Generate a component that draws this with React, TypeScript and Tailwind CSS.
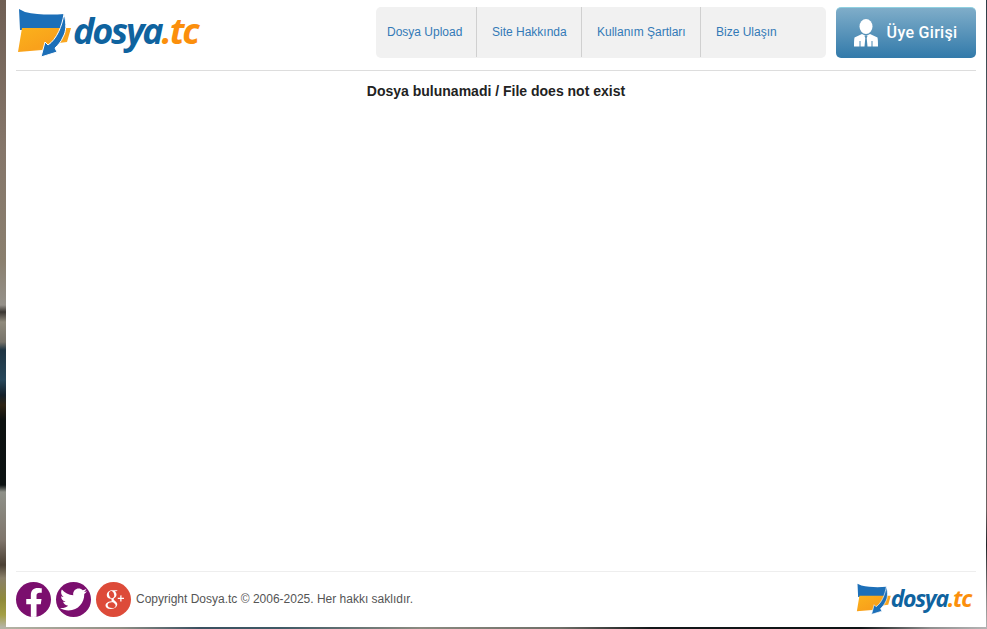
import { FaFacebookF, FaTwitter } from 'react-icons/fa';
import { TiSocialGooglePlus } from 'react-icons/ti';

function FolderMark({ className }: { className: string }) {
  return (
    <svg viewBox="0 0 54 50" className={className}>
      <defs>
        <linearGradient id="folderFront" x1="0" y1="0" x2="1" y2="1">
          <stop offset="0" stopColor="#fbb21c" />
          <stop offset="0.6" stopColor="#f9a11b" />
          <stop offset="1" stopColor="#f7b733" />
        </linearGradient>
      </defs>
      <path d="M2 1 L8 4 C20 7 36 7 47 6 L47 21 L3 22 Z" fill="#1c6fb8" />
      <path d="M5 20 L54 20 L50 34 L34 36 L25 42 L1 44 Z" fill="url(#folderFront)" />
      <path
        d="M47 6 C50 16 49 24 46 29 C44 34 41 37 38 40 L40 44 L24 49 L28 34 L31 37 C40 31 45 18 47 6 Z"
        fill="#1c6fb8"
        stroke="#ffffff"
        strokeWidth="1"
      />
    </svg>
  );
}

function Logo({ small }: { small?: boolean }) {
  return (
    <div className="flex items-center">
      <FolderMark className={small ? 'w-[35px] h-[32px]' : 'w-[54px] h-[50px]'} />
      <span
        className={`italic font-bold font-['Open_Sans',sans-serif] ${
          small
            ? 'text-[23px] tracking-[-1.3px] leading-[28px] mb-[3px]'
            : 'text-[36px] tracking-[-2.2px] ml-[2px] leading-[46px] mb-[4px]'
        }`}
      >
        <span className="text-[#0f639f]">dosya</span>
        <span className="text-[#fb8f0c]">.tc</span>
      </span>
    </div>
  );
}

function UserIcon() {
  return (
    <svg viewBox="0 0 24 28" className="w-[24px] h-[28px]" fill="#ffffff">
      <ellipse cx="12" cy="7.5" rx="6.5" ry="7.5" />
      <path d="M8 15 L0.5 18.5 C0 21 0 24 0 27.5 L5.5 27.5 L5.5 22 L6.5 22 L6.5 27.5 L10.5 27.5 L11.3 19 L10.5 17 L13.5 17 L12.7 19 L13.5 27.5 L17.5 27.5 L17.5 22 L18.5 22 L18.5 27.5 L24 27.5 C24 24 24 21 23.5 18.5 L16 15 L12 17 Z" />
    </svg>
  );
}

const navItems = [
  { label: 'Dosya Upload', cls: 'w-[101px] pl-[11px] border-r' },
  { label: 'Site Hakkında', cls: 'w-[105px] pl-[15px] border-r' },
  { label: 'Kullanım Şartları', cls: 'w-[119px] pl-[15px] border-r' },
  { label: 'Bize Ulaşın', cls: 'flex-1 pl-[15px]' },
];

export default function App() {
  return (
    <div className="h-[629px] w-full flex flex-col overflow-hidden font-['Liberation_Sans',Arial,sans-serif]">
      <div className="flex flex-1 min-h-0">
        {/* background photo edges */}
        <div className="w-[6px] bg-[linear-gradient(180deg,#6f5f54_0px,#85766a_150px,#8a7f6e_260px,#95918a_305px,#3a3632_312px,#8f8a7c_322px,#77736a_342px,#1e3442_350px,#27475a_380px,#14202a_395px,#2e2414_405px,#0d1110_420px,#0c1212_485px,#8f9189_492px,#7f756b_540px,#4b4034_565px,#8a8069_578px,#8f8a3a_600px,#a39f45_615px,#b5b4a5_627px)]" />
        <div className="w-[980px] bg-white rounded-b-[8px] px-[10px] flex flex-col">
          <header className="h-[71px] border-b border-[#dddddd] flex items-start justify-between">
            <div className="pt-[8px] pl-[1px]">
              <Logo />
            </div>
            <div className="flex pt-[7px] gap-[10px]">
              <nav className="w-[450px] h-[51px] bg-[#f1f1f1] rounded-[5px] flex">
                {navItems.map((item) => (
                  <a
                    key={item.label}
                    className={`${item.cls} h-[50px] border-[#d0d0d0] flex items-center text-[12px] text-[#337ab7]`}
                  >
                    {item.label}
                  </a>
                ))}
              </nav>
              <button className="w-[140px] h-[51px] rounded-[5px] border-t border-[#8fd0e0] bg-[linear-gradient(180deg,#7fadc9,#327aaa)] flex items-center justify-center gap-[9px] pr-[1px]">
                <UserIcon />
                <span className="text-[16px] font-medium text-white font-['Roboto',sans-serif] tracking-[0.3px]">
                  Üye Girişi
                </span>
              </button>
            </div>
          </header>

          <main className="flex-1 pt-[12px] text-center text-[14px] leading-[16px] font-bold text-[#222222]">
            Dosya bulunamadi / File does not exist
          </main>

          <footer className="h-[56px] border-t border-[#eeeeee] flex items-center justify-between pb-[1px]">
            <div className="flex items-center">
              <div className="flex gap-[5px]">
                <span className="w-[35px] h-[35px] rounded-full bg-[#7b0f6e] flex items-end justify-center text-white overflow-hidden">
                  <FaFacebookF className="w-[24px] h-[29px]" />
                </span>
                <span className="w-[35px] h-[35px] rounded-full bg-[#7b0f6e] flex items-center justify-center text-white">
                  <FaTwitter className="w-[27px] h-[27px]" />
                </span>
                <span className="w-[35px] h-[35px] rounded-full bg-[#dd4b39] flex items-center justify-center text-white">
                  <TiSocialGooglePlus className="w-[30px] h-[30px]" />
                </span>
              </div>
              <span className="ml-[5px] text-[12px] text-[#555555]">
                Copyright Dosya.tc © 2006-2025. Her hakkı saklıdır.
              </span>
            </div>
            <div className="pr-[5px]">
              <Logo small />
            </div>
          </footer>
        </div>
        <div className="flex-1 bg-[linear-gradient(180deg,#2c3c46_0px,#4e5b60_120px,#6d7272_300px,#5f6a6b_440px,#6b6060_510px,#1f2226_545px,#8d8d8d_600px,#b0b0b0_627px)]" />
      </div>
      <div className="h-[2px] bg-[linear-gradient(90deg,#b5b4a5_0px,#8f8f85_120px,#3a5060_200px,#3f5a66_280px,#8a8a80_420px,#6f6f68_560px,#14181a_650px,#0e1416_860px,#8f8f8f_930px,#b5b5b5_987px)]" />
    </div>
  );
}
